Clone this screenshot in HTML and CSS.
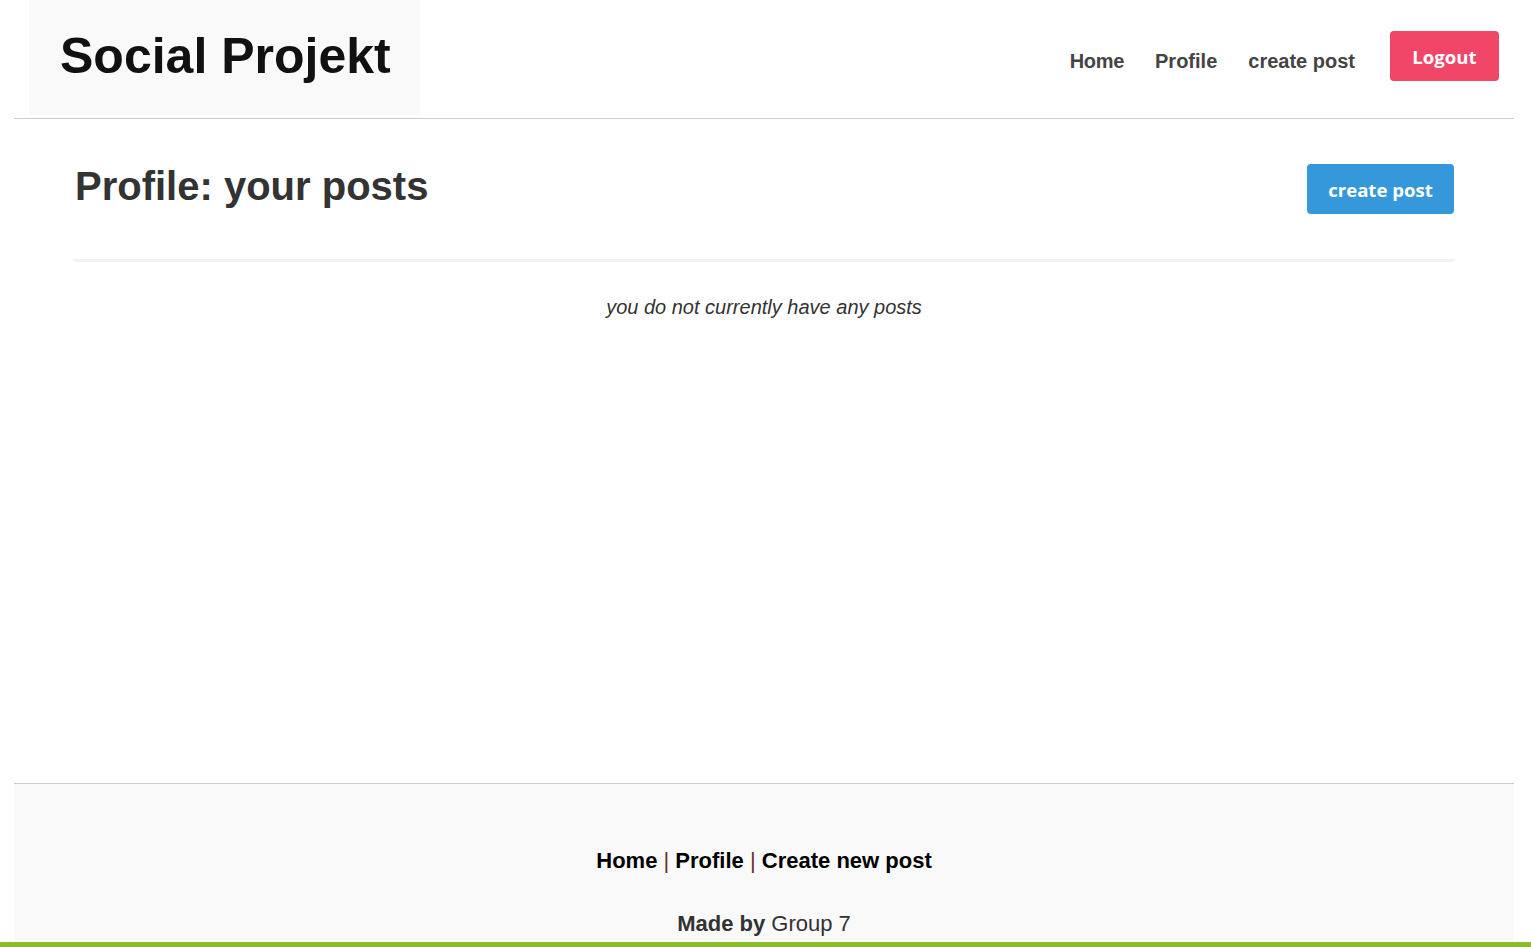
FILE: index.html
```html
<!DOCTYPE html>
<html lang="en">
<head>
<meta charset="utf-8">
<title>Social Projekt</title>
<link rel="stylesheet" href="styles.css">
</head>
<body>
<div class="page">
  <div class="wrap">
    <header class="site-header">
      <div class="logo">Social Projekt</div>
      <nav class="nav">
        <a class="nav-link" href="#">Home</a>
        <a class="nav-link" href="#">Profile</a>
        <a class="nav-link" href="#">create post</a>
        <a class="btn btn-logout" href="#">Logout</a>
      </nav>
    </header>
    <main class="content">
      <div class="title-row">
        <h1 class="title">Profile: your posts</h1>
        <a class="btn btn-create" href="#">create post</a>
      </div>
      <div class="divider"></div>
      <p class="empty">you do not currently have any posts</p>
    </main>
    <footer class="site-footer">
      <div class="footer-links">
        <a href="#">Home</a> <span class="sep">|</span> <a href="#">Profile</a> <span class="sep">|</span> <a href="#">Create new post</a>
      </div>
      <div class="credit"><b>Made by</b> Group 7</div>
    </footer>
  </div>
  <div class="green-bar"></div>
</div>
</body>
</html>
```

FILE: styles.css
```css
* { box-sizing: border-box; }
html, body { margin: 0; padding: 0; background: #fff; }
body { font-family: "Liberation Sans", Arial, sans-serif; color: #333; }
a { text-decoration: none; }

.page { min-height: 100vh; display: flex; flex-direction: column; }
.wrap { flex: 1; display: flex; flex-direction: column; margin: 0 17px 0 14px; }

.site-header {
  height: 119px;
  border-bottom: 1px solid #cccccc;
  display: flex;
  justify-content: space-between;
  align-items: flex-start;
}
.logo {
  margin-left: 15px;
  width: 391px;
  height: 115px;
  background: #f9f9f9;
  padding: 27px 0 0 31px;
  font-size: 50px;
  font-weight: bold;
  color: #111;
  line-height: normal;
}
.nav {
  display: flex;
  align-items: flex-start;
  padding-top: 31px;
  margin-right: 15px;
}
.nav-link {
  font-size: 20px;
  font-weight: bold;
  color: #444;
  margin: 19px 31px 0 0;
  line-height: 23px;
}
.nav-link:first-child { letter-spacing: -0.3px; }
.nav-link:nth-child(3) { margin-right: 35px; }

.btn {
  display: flex;
  align-items: center;
  justify-content: center;
  height: 50px;
  padding-top: 1px;
  color: #fff;
  font-family: "Open Sans", "Liberation Sans", sans-serif;
  font-weight: bold;
  font-size: 18.6px;
  border-radius: 4px;
}
.btn-logout { width: 109px; background: #f24669; }
.btn-create { width: 147px; background: #3498db; }

.content { flex: 1; padding: 45px 60px 0 60px; }
.title-row { display: flex; justify-content: space-between; align-items: flex-start; }
.title {
  margin: -1px 0 0 1px;
  font-size: 40px;
  font-weight: bold;
  color: #333;
  line-height: 46px;
}
.divider { margin-top: 45px; height: 3px; background: #f1f1f1; }
.empty {
  margin: 34px 0 0 0;
  text-align: center;
  font-style: italic;
  font-size: 20px;
  line-height: 23px;
  color: #333;
}

.site-footer {
  height: 159px;
  border-top: 1px solid #cccccc;
  background: #f9f9f9;
  text-align: center;
  padding-top: 64px;
  overflow: hidden;
}
.footer-links { font-size: 22px; line-height: 25px; }
.footer-links a { color: #000; font-weight: bold; }
.footer-links .sep { color: #6d2e2e; }
.credit { margin-top: 38px; font-size: 22px; line-height: 25px; color: #333; }

.green-bar { height: 5px; background: #8bbd28; }
```
